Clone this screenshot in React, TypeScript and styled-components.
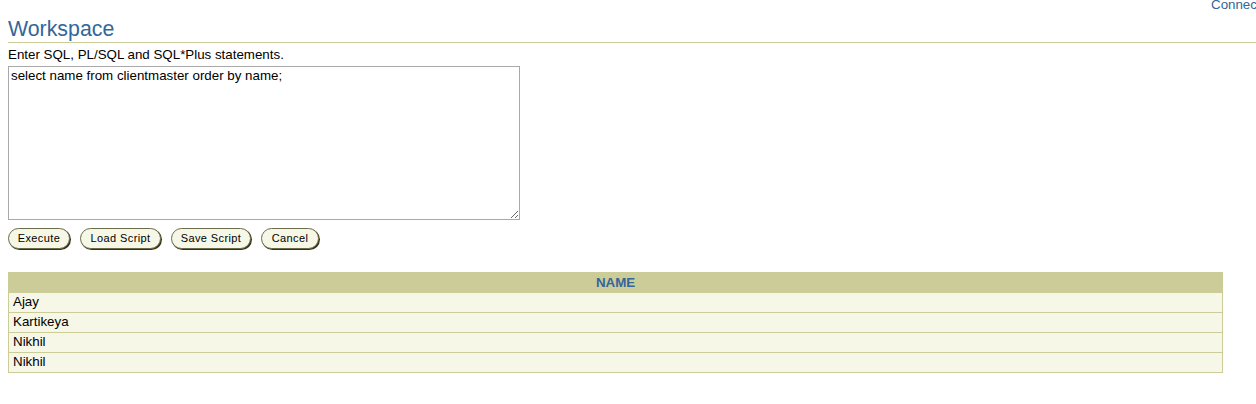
import React from "react";
import styled, { createGlobalStyle } from "styled-components";

const GlobalStyle = createGlobalStyle`
  html, body {
    margin: 0;
    padding: 0;
    background: #ffffff;
    overflow: hidden;
  }
  body {
    font-family: "Liberation Sans", Arial, sans-serif;
    font-size: 13.33px;
    color: #000000;
  }
`;

const Page = styled.div`
  width: 1256px;
  display: flex;
  flex-direction: column;
`;

const TopBar = styled.div`
  height: 10px;
  line-height: 10px;
  display: flex;
  justify-content: flex-end;
  overflow: hidden;
`;

const ConnLink = styled.a`
  display: block;
  width: 45px;
  overflow: hidden;
  white-space: nowrap;
  color: #336699;
  text-decoration: none;
  font-size: 13.33px;
`;

const Title = styled.h1`
  margin: 6px 0 0 8px;
  font-size: 21.33px;
  font-weight: normal;
  line-height: 26px;
  color: #336699;
  border-bottom: 1px solid #cccc99;
`;

const Content = styled.div`
  padding-left: 8px;
  display: flex;
  flex-direction: column;
  align-items: flex-start;
`;

const Label = styled.div`
  margin-top: 4px;
  line-height: 15px;
`;

const Editor = styled.textarea`
  margin-top: 4px;
  box-sizing: border-box;
  width: 512px;
  height: 154px;
  padding: 1px 2px;
  border: 1px solid #a9a9a9;
  font-family: "Liberation Sans", Arial, sans-serif;
  font-size: 13.33px;
  color: #000;
  resize: both;
  outline: none;
`;

const ButtonRow = styled.div`
  margin-top: 8px;
  display: flex;
  gap: 10px;
`;

const Button = styled.button<{ $w: number }>`
  box-sizing: border-box;
  width: ${(p) => p.$w}px;
  height: 21px;
  padding: 0;
  border: 1px solid #6b6b4a;
  border-radius: 11px;
  background: #f7f7e7;
  box-shadow: 1px 1px 0 #33331a;
  font-family: "Liberation Sans", Arial, sans-serif;
  font-size: 11px;
  letter-spacing: 0.4px;
  color: #000;
  line-height: 19px;
  text-align: center;
  cursor: pointer;
`;

const Results = styled.table`
  margin-top: 23px;
  width: 1215px;
  border-collapse: collapse;
`;

const HeadCell = styled.th`
  background: #cccc99;
  border: 1px solid #cccc99;
  padding: 2px 5px;
  line-height: 15px;
  font-size: 13.33px;
  font-weight: bold;
  color: #336699;
  text-align: center;
`;

const Cell = styled.td`
  background: #f7f7e7;
  border: 1px solid #cccc99;
  padding: 1px 4px 3px;
  line-height: 15px;
  font-size: 13.33px;
  color: #000;
  text-align: left;
`;

const names = ["Ajay", "Kartikeya", "Nikhil", "Nikhil"];

const buttons: { label: string; w: number }[] = [
  { label: "Execute", w: 62 },
  { label: "Load Script", w: 81 },
  { label: "Save Script", w: 80 },
  { label: "Cancel", w: 58 },
];

export default function App() {
  return (
    <>
      <GlobalStyle />
      <Page>
        <TopBar>
          <ConnLink href="#">Connected as SYSTEM</ConnLink>
        </TopBar>
        <Title>Workspace</Title>
        <Content>
          <Label>Enter SQL, PL/SQL and SQL*Plus statements.</Label>
          <Editor defaultValue="select name from clientmaster order by name;" />
          <ButtonRow>
            {buttons.map((b) => (
              <Button key={b.label} $w={b.w}>
                {b.label}
              </Button>
            ))}
          </ButtonRow>
          <Results>
            <thead>
              <tr>
                <HeadCell>NAME</HeadCell>
              </tr>
            </thead>
            <tbody>
              {names.map((n, i) => (
                <tr key={i}>
                  <Cell>{n}</Cell>
                </tr>
              ))}
            </tbody>
          </Results>
        </Content>
      </Page>
    </>
  );
}
